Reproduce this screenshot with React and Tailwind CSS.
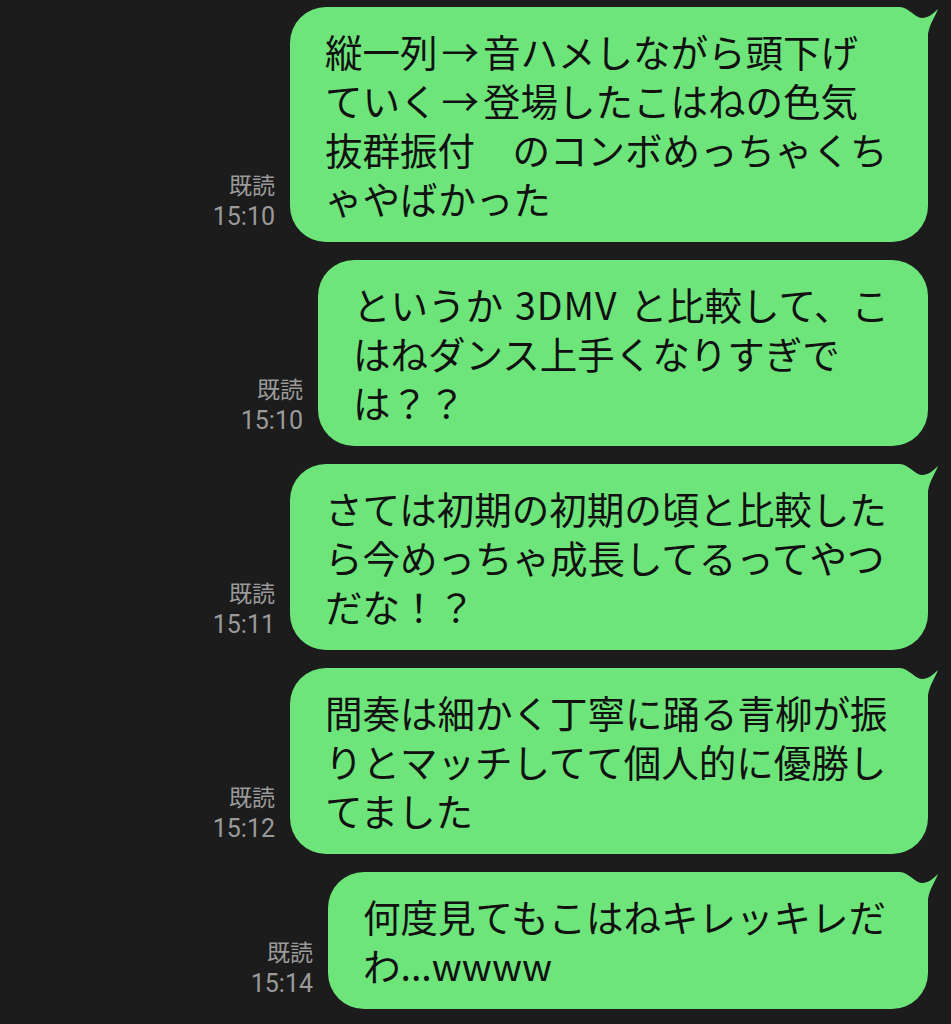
import React from "react";

const Arrow = () => <span className="mx-[4px]">→</span>;

const messages = [
  {
    lines: [
      <>縦一列<Arrow />音ハメしながら頭下げ</>,
      <>ていく<Arrow />登場したこはねの色気</>,
      "抜群振付　のコンボめっちゃくち",
      "ゃやばかった",
    ],
    time: "15:10",
    width: "w-[638px]",
    tail: true,
  },
  {
    lines: [
      <>というか<span className="mx-[12px] tracking-[1px]">3DMV</span>と比較して、こ</>,
      "はねダンス上手くなりすぎで",
      "は？？",
    ],
    time: "15:10",
    width: "w-[610px]",
    tail: false,
  },
  {
    lines: ["さては初期の初期の頃と比較した", "ら今めっちゃ成長してるってやつ", "だな！？"],
    time: "15:11",
    width: "w-[638px]",
    tail: true,
  },
  {
    lines: ["間奏は細かく丁寧に踊る青柳が振", "りとマッチしてて個人的に優勝し", "てました"],
    time: "15:12",
    width: "w-[638px]",
    tail: true,
  },
  {
    lines: ["何度見てもこはねキレッキレだ", "わ...wwww"],
    time: "15:14",
    width: "w-[600px]",
    tail: true,
  },
];

function Tail() {
  return (
    <svg
      className="absolute top-0 right-[-10px]"
      width="50"
      height="46"
      viewBox="0 0 50 46"
    >
      <path
        d="M0,0 H12 C20,0 27,11 34,11 C40,11 45,7 50,2 C47,10 42,16 40,27 V46 H0 Z"
        fill="#6ee57b"
      />
    </svg>
  );
}

export default function App() {
  return (
    <div className="min-h-[1024px] w-full bg-[#1c1c1c] pt-[7px] pr-[23px] flex flex-col items-end gap-[18px]">
      {messages.map((m, i) => (
        <div key={i} className="flex items-end gap-[15px]">
          <div
            className="flex flex-col items-end mb-[10px] leading-[30px] text-[#9a9a9a]"
            style={{ fontFamily: 'Roboto, "Noto Sans CJK JP", sans-serif' }}
          >
            <span className="text-[23px]">既読</span>
            <span className="text-[25px]">{m.time}</span>
          </div>
          <div
            className={`relative ${m.width} rounded-[36px] bg-[#6ee57b] pl-[35px] pr-[36px] pt-[19px] pb-[20px] text-[37.5px] leading-[49px] text-[#111111]`}
            style={{ fontFamily: '"Noto Sans CJK JP", sans-serif' }}
          >
            {m.tail && <Tail />}
            <div className="relative">
              {m.lines.map((l, j) => (
                <div key={j} className="whitespace-nowrap">
                  {l}
                </div>
              ))}
            </div>
          </div>
        </div>
      ))}
    </div>
  );
}
